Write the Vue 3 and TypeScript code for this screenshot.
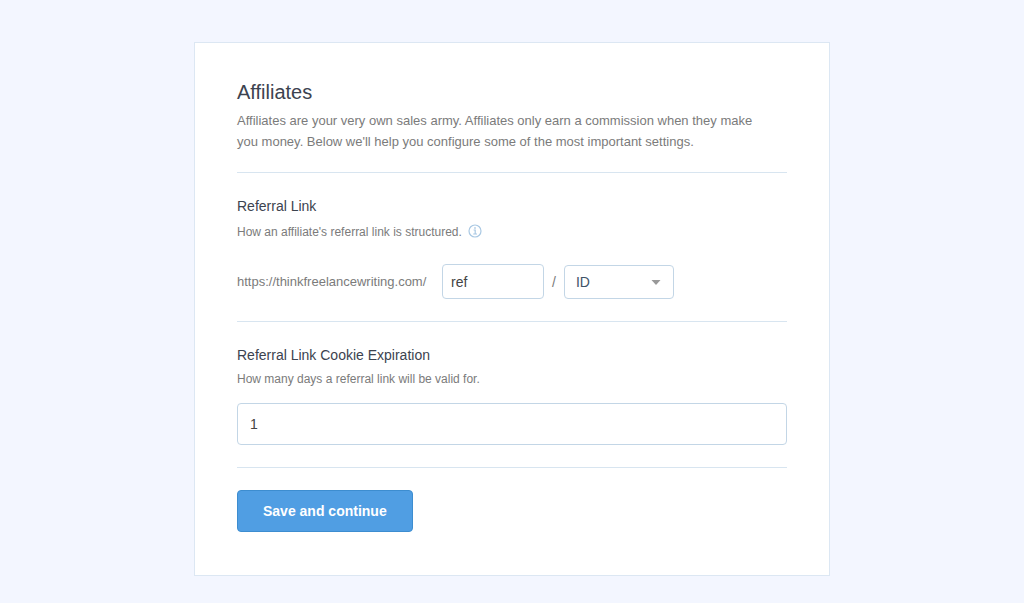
<script setup lang="ts">
import { ref } from 'vue'

const slug = ref<string>('ref')
const identifier = ref<string>('ID')
const days = ref<string>('1')
const identifiers: string[] = ['ID', 'Username']
</script>

<template>
  <main class="page">
    <form class="card" @submit.prevent>
      <header class="intro">
        <h1>Affiliates</h1>
        <p>
          Affiliates are your very own sales army. Affiliates only earn a commission when they make
          <br />you money. Below we'll help you configure some of the most important settings.
        </p>
      </header>

      <section class="group link-group">
        <h2><label for="slug">Referral Link</label></h2>
        <p class="hint">
          How an affiliate's referral link is structured.
          <svg class="info" viewBox="0 0 14 14" aria-hidden="true">
            <circle cx="7" cy="7" r="6" />
            <path d="M5.6 6H7.2V10M5.2 10H9" />
            <path d="M6.2 4H7.8" class="dot" />
          </svg>
        </p>
        <div class="url">
          <span class="domain">https://thinkfreelancewriting.com/</span>
          <input id="slug" v-model="slug" class="slug" type="text" />
          <span>/</span>
          <span class="picker">
            <select v-model="identifier" aria-label="Affiliate identifier">
              <option v-for="item in identifiers" :key="item">{{ item }}</option>
            </select>
            <svg class="caret" viewBox="0 0 10 5" aria-hidden="true"><path d="M0.5 0H9.5L5 5Z" /></svg>
          </span>
        </div>
      </section>

      <section class="group expiry-group">
        <h2><label for="days">Referral Link Cookie Expiration</label></h2>
        <p class="hint">How many days a referral link will be valid for.</p>
        <input id="days" v-model="days" class="days" type="text" inputmode="numeric" />
      </section>

      <footer class="group actions">
        <button type="submit">Save and continue</button>
      </footer>
    </form>
  </main>
</template>

<style>
body {
  background: #f3f6ff;
}
</style>

<style scoped>
.page {
  padding: 42px 24px 27px;
  color: #7b7b7b;
  font-family: "Liberation Sans", Arial, sans-serif;
  font-size: 14px;
  line-height: 20px;
}

.page * {
  box-sizing: border-box;
}

.card {
  max-width: 636px;
  margin: 0 auto;
  padding: 35px 42px 43px;
  background: #fff;
  border: 1px solid #dce7f3;
}

h1,
h2,
p {
  margin: 0;
  font-weight: 400;
}

h1 {
  color: #3c434f;
  font-size: 20px;
  line-height: 28px;
}

h2 {
  color: #3c434f;
  font-size: 14px;
  line-height: 20px;
}

.intro {
  padding-bottom: 20px;
}

.intro p {
  margin-top: 4px;
  font-size: 13px;
  line-height: 21px;
}

.group {
  padding: 23px 0 22px;
  border-top: 1px solid #d8e5f0;
}

.hint {
  font-size: 12px;
  line-height: 20px;
}

.link-group .hint {
  margin-top: 6px;
}

.expiry-group .hint {
  margin-top: 4px;
}

.info {
  width: 14px;
  height: 14px;
  margin-left: 3px;
  vertical-align: -2px;
  fill: none;
  stroke: #a9c8e3;
  stroke-width: 1.2;
}

.info .dot {
  stroke-width: 1.6;
}

.url {
  display: flex;
  align-items: center;
  gap: 8px;
  margin-top: 22px;
}

.domain {
  min-width: 197px;
  font-size: 13px;
}

input,
select {
  background: #fff;
  border: 1px solid #c3d6e6;
  border-radius: 4px;
  outline: none;
  font-family: inherit;
  font-size: 14px;
}

input {
  color: #444;
}

.slug {
  width: 102px;
  height: 35px;
  padding: 0 8px;
}

.picker {
  position: relative;
}

select {
  display: block;
  width: 110px;
  height: 34px;
  padding: 0 11px;
  appearance: none;
  color: #3f5368;
}

.caret {
  position: absolute;
  top: 15px;
  right: 13px;
  width: 10px;
  height: 5px;
  fill: #999;
  pointer-events: none;
}

.days {
  display: block;
  width: 100%;
  height: 42px;
  margin-top: 14px;
  padding: 0 12px;
}

.actions {
  padding: 22px 0 0;
}

button {
  height: 42px;
  padding: 0 25px;
  background: #509ee3;
  border: 1px solid #3d8dd0;
  border-radius: 4px;
  color: #fff;
  font-family: inherit;
  font-size: 14px;
  font-weight: 700;
  cursor: pointer;
}
</style>
